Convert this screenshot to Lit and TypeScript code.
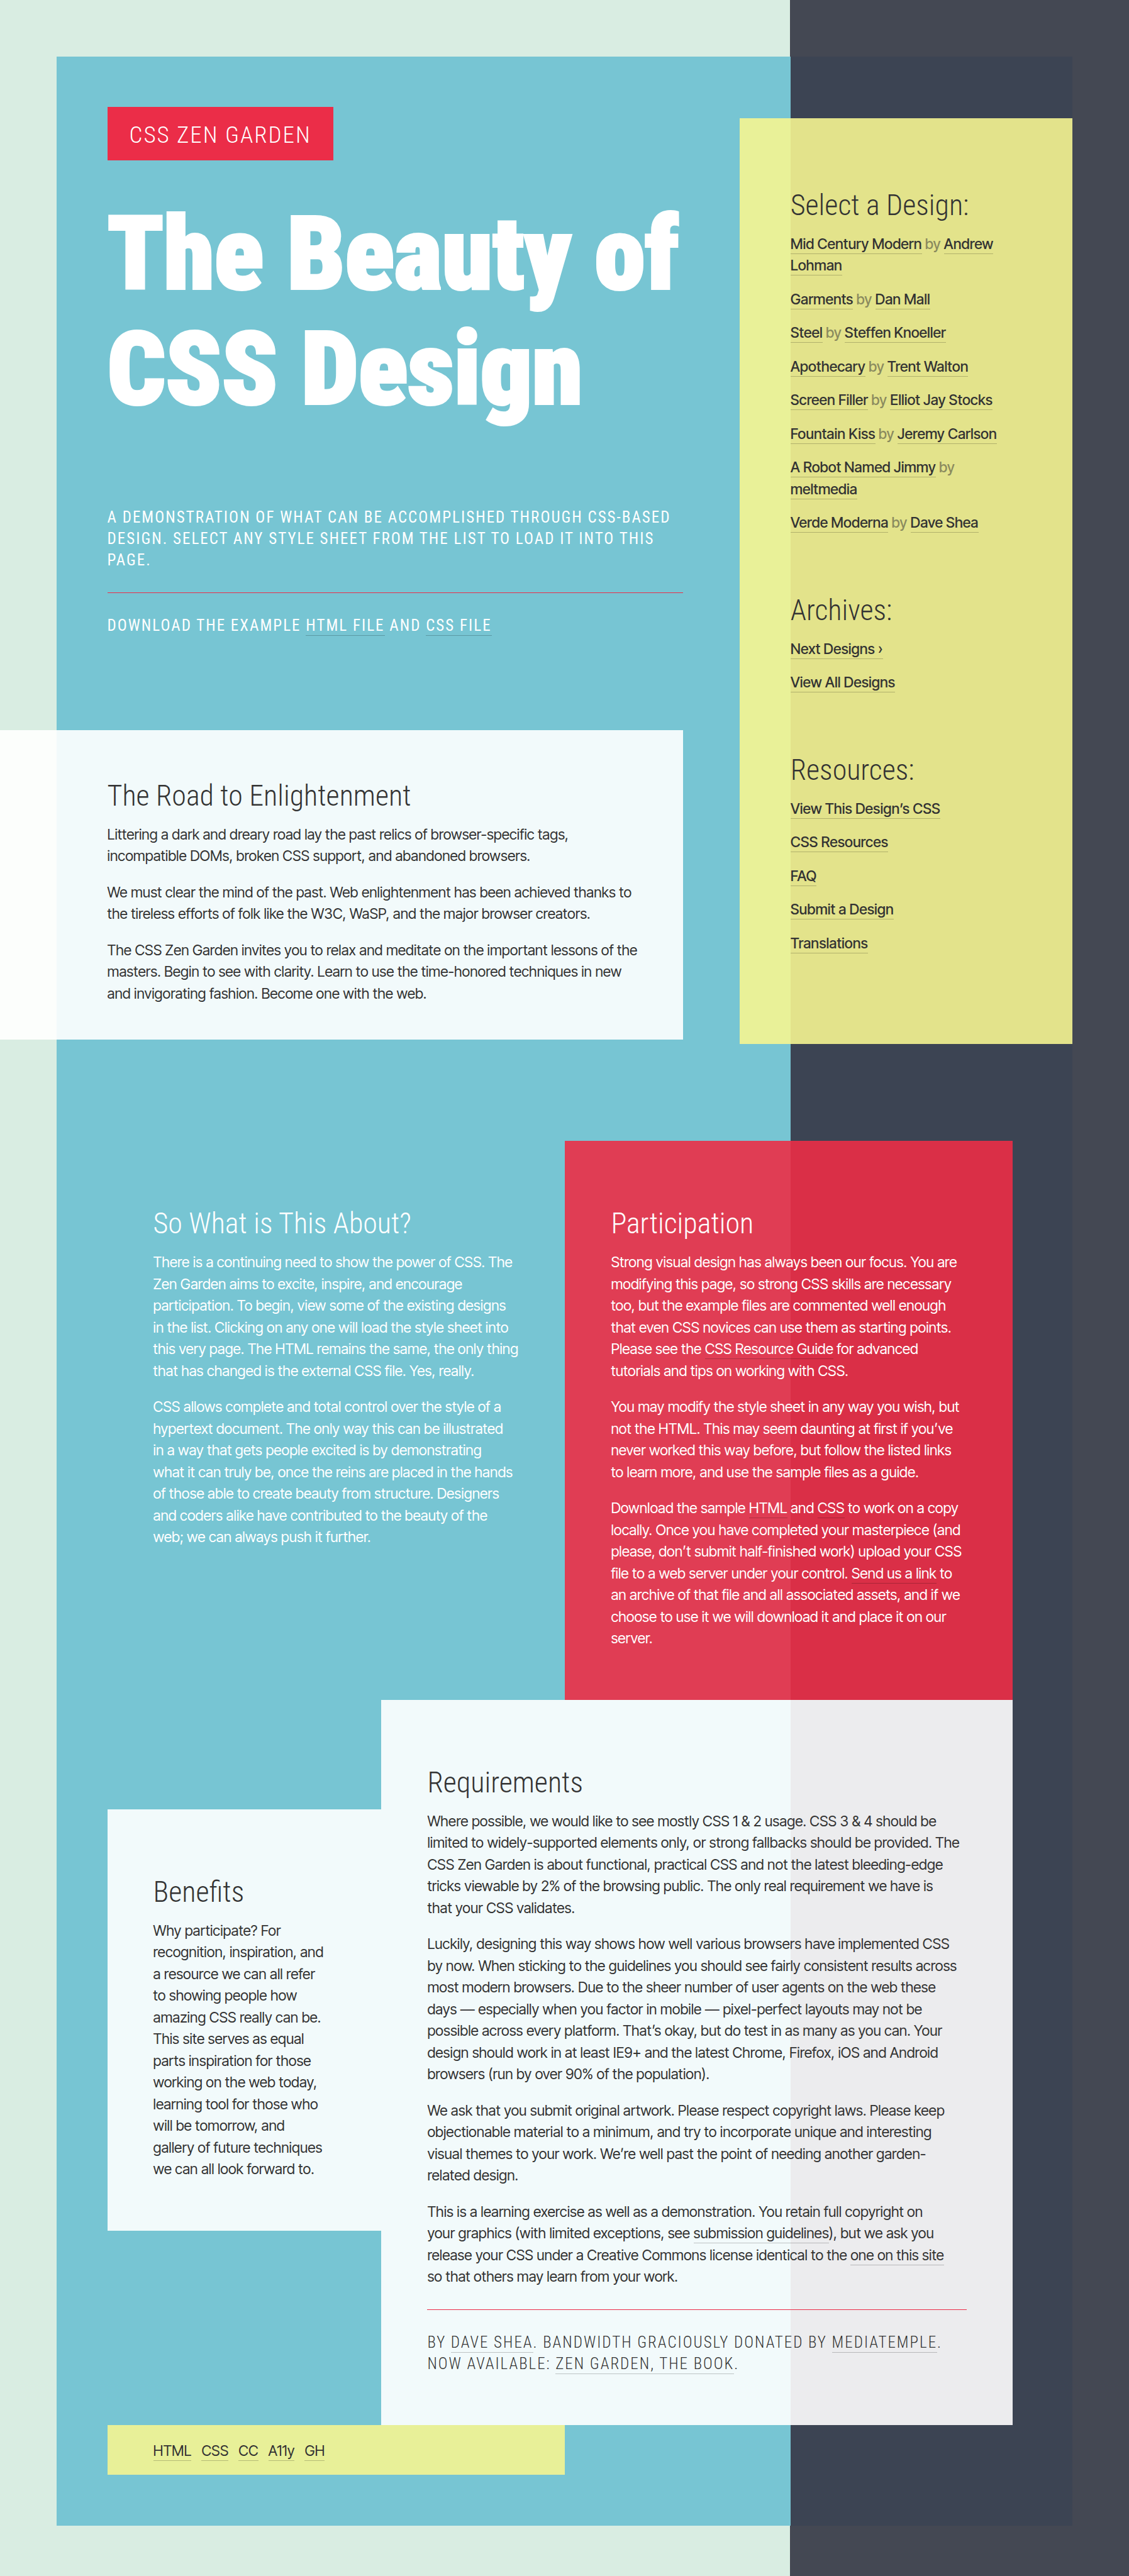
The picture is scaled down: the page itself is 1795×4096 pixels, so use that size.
import { LitElement, html, css } from "lit";
import { customElement } from "lit/decorators.js";

interface Design {
  title: string;
  author: string;
}

const designs: Design[] = [
  { title: "Mid Century Modern", author: "Andrew Lohman" },
  { title: "Garments", author: "Dan Mall" },
  { title: "Steel", author: "Steffen Knoeller" },
  { title: "Apothecary", author: "Trent Walton" },
  { title: "Screen Filler", author: "Elliot Jay Stocks" },
  { title: "Fountain Kiss", author: "Jeremy Carlson" },
  { title: "A Robot Named Jimmy", author: "meltmedia" },
  { title: "Verde Moderna", author: "Dave Shea" },
];

const archives = ["Next Designs ›", "View All Designs"];

const resources = [
  "View This Design’s CSS",
  "CSS Resources",
  "FAQ",
  "Submit a Design",
  "Translations",
];

const footerLinks = ["HTML", "CSS", "CC", "A11y", "GH"];

@customElement("app-root")
export class AppRoot extends LitElement {
  static styles = css`
    :host {
      --mint: #d9ede2;
      --teal: #77c5d3;
      --slate: #444853;
      --navy: #3c4453;
      --red: #eb2d48;
      --ink: #333333;
      --edge: 5vw;
      --gutter: 4.5vw;
      --condensed: "Roboto Condensed", Roboto, "Liberation Sans", sans-serif;
      display: block;
      color: var(--ink);
      font-family: "Inter Tight", Inter, Roboto, "Liberation Sans", sans-serif;
      font-size: 23px;
      line-height: 1.5;
    }

    h1, h2, h3, p, ul {
      margin: 0;
      padding: 0;
      font-weight: inherit;
    }

    ul {
      list-style: none;
    }

    a {
      color: inherit;
      text-decoration: none;
      padding-bottom: 1px;
      border-bottom: 1px solid rgba(0, 0, 0, 0.22);
    }

    .page {
      box-sizing: border-box;
      display: flex;
      flex-direction: column;
      min-height: 100vh;
      padding: var(--edge) var(--edge) 80px;
      background: linear-gradient(90deg, var(--mint) 70vw, var(--slate) 70vw);
    }

    .frame {
      flex: 1;
      background: linear-gradient(90deg, var(--teal) 65vw, var(--navy) 65vw);
    }

    .top {
      display: grid;
      grid-template-columns: 55.5vw 1fr 29.5vw;
      align-items: start;
    }

    .masthead {
      padding: 80px 0 149px var(--gutter);
      color: #ffffff;
    }

    .badge {
      display: inline-block;
      padding: 23px 35px 19px;
      background: var(--red);
      font-family: var(--condensed);
      font-size: 37px;
      font-weight: 300;
      line-height: 43px;
      letter-spacing: 2px;
      vertical-align: top;
    }

    .title {
      margin-top: 58px;
      font-family: var(--condensed);
      font-size: 162px;
      font-weight: 900;
      line-height: 183px;
      -webkit-text-stroke: 4px #ffffff;
    }

    .caps {
      font-family: var(--condensed);
      font-size: 25px;
      font-weight: 400;
      line-height: 34px;
      letter-spacing: 2px;
    }

    .intro {
      margin-top: 127px;
    }

    .ruled {
      margin-top: 34px;
      padding-top: 35px;
      border-top: 1px solid var(--red);
    }

    .heading {
      margin-bottom: 18px;
      font-family: var(--condensed);
      font-size: 46px;
      font-weight: 300;
      line-height: 54px;
    }

    .copy {
      display: grid;
      gap: 23px;
    }

    .white {
      background: rgba(255, 255, 255, 0.9);
    }

    .preamble {
      margin-left: calc(-1 * var(--edge));
      padding: 77px 58px 56px calc(var(--edge) + var(--gutter));
    }

    .sidebar {
      grid-column: 3;
      margin-top: 98px;
      padding: 111px 81px 49px;
      background: rgba(245, 245, 145, 0.9);
    }

    .group {
      margin-bottom: 94px;
    }

    .list {
      display: grid;
      gap: 19px;
      font-weight: 500;
    }

    .by {
      opacity: 0.5;
    }

    .main {
      display: grid;
      grid-template-columns: 436fr 292fr 712fr;
      align-items: start;
      margin: 154px 95px 80px var(--gutter);
    }

    .panel {
      padding: 104px 73px 80px;
    }

    .about {
      grid-column: 1 / 3;
      color: #ffffff;
    }

    .participation {
      grid-column: 3;
      background: rgba(235, 45, 70, 0.9);
      color: #ffffff;
    }

    .benefits {
      grid-column: 1;
      margin-top: 174px;
      padding-right: 87px;
    }

    .requirements {
      grid-column: 2 / 4;
    }

    .credits {
      font-weight: 300;
    }

    .footer {
      grid-column: 1 / 3;
      display: flex;
      gap: 16px;
      padding: 24px 73px 21px;
      background: #e8f098;
    }
  `;

  private linkList(items: string[]) {
    return html`<ul class="list">
      ${items.map((item) => html`<li><a href="#">${item}</a></li>`)}
    </ul>`;
  }

  render() {
    return html`
      <div class="page">
        <div class="frame">
          <div class="top">
            <div>
              <header class="masthead">
                <h1 class="badge">CSS ZEN GARDEN</h1>
                <h2 class="title">The Beauty of CSS Design</h2>
                <p class="caps intro">
                  A DEMONSTRATION OF WHAT CAN BE ACCOMPLISHED THROUGH CSS-BASED
                  DESIGN. SELECT ANY STYLE SHEET FROM THE LIST TO LOAD IT INTO
                  THIS PAGE.
                </p>
                <p class="caps ruled">
                  DOWNLOAD THE EXAMPLE <a href="#">HTML FILE</a> AND
                  <a href="#">CSS FILE</a>
                </p>
              </header>
              <section class="preamble white">
                <h3 class="heading">The Road to Enlightenment</h3>
                <div class="copy">
                  <p>
                    Littering a dark and dreary road lay the past relics of
                    browser-specific tags, incompatible DOMs, broken CSS
                    support, and abandoned browsers.
                  </p>
                  <p>
                    We must clear the mind of the past. Web enlightenment has
                    been achieved thanks to the tireless efforts of folk like
                    the W3C, WaSP, and the major browser creators.
                  </p>
                  <p>
                    The CSS Zen Garden invites you to relax and meditate on the
                    important lessons of the masters. Begin to see with clarity.
                    Learn to use the time-honored techniques in new and
                    invigorating fashion. Become one with the web.
                  </p>
                </div>
              </section>
            </div>

            <aside class="sidebar">
              <nav class="group">
                <h3 class="heading">Select a Design:</h3>
                <ul class="list">
                  ${designs.map(
                    (d) => html`<li>
                      <a href="#">${d.title}</a> <span class="by">by</span>
                      <a href="#">${d.author}</a>
                    </li>`,
                  )}
                </ul>
              </nav>
              <nav class="group">
                <h3 class="heading">Archives:</h3>
                ${this.linkList(archives)}
              </nav>
              <nav class="group">
                <h3 class="heading">Resources:</h3>
                ${this.linkList(resources)}
              </nav>
            </aside>
          </div>

          <main class="main">
            <section class="panel about">
              <h3 class="heading">So What is This About?</h3>
              <div class="copy">
                <p>
                  There is a continuing need to show the power of CSS. The Zen
                  Garden aims to excite, inspire, and encourage participation.
                  To begin, view some of the existing designs in&nbsp;the list.
                  Clicking on any one will load the style sheet into this very
                  page. The HTML remains the same, the only thing that has
                  changed is the external CSS file. Yes, really.
                </p>
                <p>
                  CSS allows complete and total control over the style of a
                  hypertext document. The only way this can be illustrated
                  in&nbsp;a&nbsp;way that gets people excited is by
                  demonstrating what&nbsp;it can truly be, once the reins are
                  placed in the hands of those able to create beauty from
                  structure. Designers and coders alike have contributed to the
                  beauty of the web; we can always push it further.
                </p>
              </div>
            </section>

            <section class="panel participation">
              <h3 class="heading">Participation</h3>
              <div class="copy">
                <p>
                  Strong visual design has always been our focus. You are
                  modifying this page, so strong CSS skills are necessary too,
                  but the example files are commented well enough that even CSS
                  novices can use them as starting points. Please see the
                  <a href="#">CSS Resource Guide</a> for advanced tutorials and
                  tips on working with CSS.
                </p>
                <p>
                  You may modify the style sheet in any way you wish, but not
                  the HTML. This may seem daunting at first if you’ve never
                  worked this way before, but follow the listed links to learn
                  more, and use the sample files as a guide.
                </p>
                <p>
                  Download the sample <a href="#">HTML</a> and
                  <a href="#">CSS</a> to work on a copy locally. Once you have
                  completed your masterpiece (and please, don’t submit
                  half-finished work) upload your CSS file to a web server under
                  your control. <a href="#">Send us a link</a> to an archive of
                  that file and all associated assets, and if we choose to use
                  it we will download it and place it on our server.
                </p>
              </div>
            </section>

            <section class="panel benefits white">
              <h3 class="heading">Benefits</h3>
              <p>
                Why participate? For recognition, inspiration, and a resource we
                can all refer to showing people how amazing CSS really can be.
                This site serves as equal parts inspiration for those working on
                the web today, learning tool for those who will be tomorrow, and
                gallery of future techniques we can all look forward to.
              </p>
            </section>

            <section class="panel requirements white">
              <h3 class="heading">Requirements</h3>
              <div class="copy">
                <p>
                  Where possible, we would like to see mostly CSS 1 &amp; 2
                  usage. CSS 3 &amp; 4 should be limited to widely-supported
                  elements only, or strong fallbacks should be provided. The CSS
                  Zen Garden is about functional, practical CSS and not the
                  latest bleeding-edge tricks viewable by 2% of the browsing
                  public. The only real requirement we have is that&nbsp;your
                  CSS validates.
                </p>
                <p>
                  Luckily, designing this way shows how well various browsers
                  have implemented CSS by now. When sticking to the guidelines
                  you should see fairly consistent results across most modern
                  browsers. Due to the sheer number of user agents on the web
                  these days — especially when you factor in mobile —
                  pixel-perfect layouts may not be possible across every
                  platform. That’s okay, but do test in as many as you can. Your
                  design should work in at least IE9+ and the latest Chrome,
                  Firefox, iOS and Android browsers (run by over 90% of the
                  population).
                </p>
                <p>
                  We ask that you submit original artwork. Please respect
                  copyright laws. Please keep objectionable material to a
                  minimum, and try to incorporate unique and interesting visual
                  themes to your work. We’re well past the point of needing
                  another garden-related design.
                </p>
                <p>
                  This is a learning exercise as well as a demonstration. You
                  retain full copyright on your&nbsp;graphics (with limited
                  exceptions, see <a href="#">submission guidelines</a>), but we
                  ask you release your CSS under a Creative Commons license
                  identical to the <a href="#">one on this site</a>
                  so&nbsp;that others may learn from your work.
                </p>
              </div>
              <p class="caps ruled credits">
                BY <a href="#">DAVE SHEA</a>. BANDWIDTH GRACIOUSLY DONATED BY
                <a href="#">MEDIATEMPLE</a>. NOW AVAILABLE:
                <a href="#">ZEN GARDEN, THE BOOK</a>.
              </p>
            </section>

            <footer class="footer">
              ${footerLinks.map((l) => html`<span><a href="#">${l}</a></span>`)}
            </footer>
          </main>
        </div>
      </div>
    `;
  }
}
